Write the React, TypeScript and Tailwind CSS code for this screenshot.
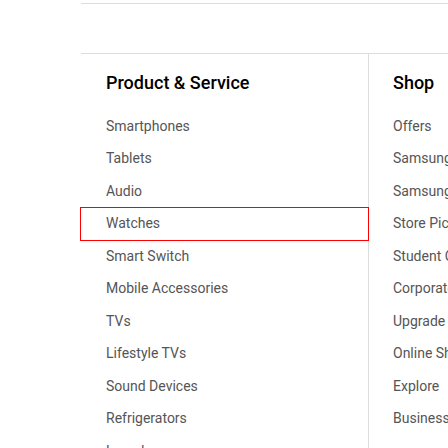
const productLinks = [
  'Smartphones',
  'Tablets',
  'Audio',
  'Watches',
  'Smart Switch',
  'Mobile Accessories',
  'TVs',
  'Lifestyle TVs',
  'Sound Devices',
  'Refrigerators',
  'Laundry',
];

const shopLinks = [
  'Offers',
  'Samsung Education Offers',
  'Samsung Rewards',
  'Store Pickup',
  'Student Offers',
  'Corporate Purchase Program',
  'Upgrade Program',
  'Online Shop FAQs',
  'Explore',
  'Business Shop',
];

function FooterColumn({
  title,
  links,
  focused,
  className,
}: {
  title: string;
  links: string[];
  focused?: string;
  className?: string;
}) {
  return (
    <div className={className}>
      <div className="h-[56px] flex items-center">
        <h3 className="px-[25px] text-[18px] font-medium text-black whitespace-nowrap">{title}</h3>
      </div>
      <ul>
        {links.map((link) => (
          <li key={link}>
            <a
              href="#"
              className={
                'h-[32.5px] flex items-center px-[25px] text-[14px] text-[#555] whitespace-nowrap ' +
                (link === focused ? 'outline outline-1 outline-[#f00] relative z-10' : '')
              }
            >
              {link}
            </a>
          </li>
        ))}
      </ul>
    </div>
  );
}

export default function App() {
  return (
    <div
      className="w-[448px] h-[448px] overflow-hidden bg-white pl-[81px] pt-[3px]"
      style={{ fontFamily: 'Roboto, "Open Sans", sans-serif' }}
    >
      <div className="border-t border-[#ddd] h-[50px]" />
      <div className="border-t border-[#ddd] flex">
        <FooterColumn
          title="Product & Service"
          links={productLinks}
          focused="Watches"
          className="w-[288px] shrink-0 border-r border-[#ddd]"
        />
        <FooterColumn title="Shop" links={shopLinks} className="w-[240px] shrink-0 -ml-px" />
      </div>
    </div>
  );
}
